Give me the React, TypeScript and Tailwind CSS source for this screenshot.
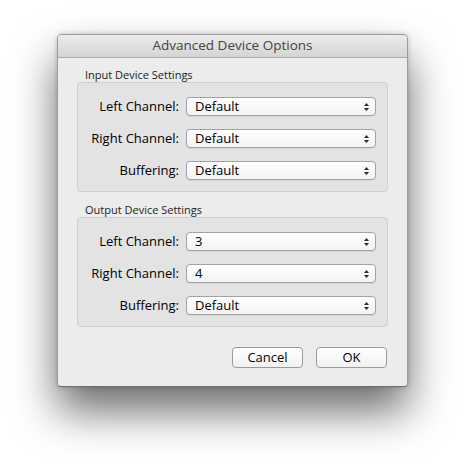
import React from "react";

const font = { fontFamily: '"Open Sans", "Liberation Sans", sans-serif' };

function Arrows() {
  return (
    <svg width="7" height="10" viewBox="0 0 7 10" className="shrink-0">
      <path d="M3.5 1 L6 4 L1 4 Z" fill="#2a2a2a" />
      <path d="M3.5 9 L6 6 L1 6 Z" fill="#2a2a2a" />
    </svg>
  );
}

function PopUp({ value }: { value: string }) {
  return (
    <div className="flex h-[19px] w-[190px] items-center justify-between rounded-[4px] border border-[#a3a3a3] bg-gradient-to-b from-white to-[#f3f3f3] pl-[8px] pr-[5px] shadow-[0_1px_0_rgba(0,0,0,0.06)]">
      <span className="text-[13px] leading-none text-black">{value}</span>
      <Arrows />
    </div>
  );
}

function Row({ label, value }: { label: string; value: string }) {
  return (
    <div className="flex items-center">
      <span className="w-[102px] pr-[1px] text-right text-[13px] leading-none text-black">
        {label}
      </span>
      <div className="ml-[6px]">
        <PopUp value={value} />
      </div>
    </div>
  );
}

function Group({
  title,
  rows,
}: {
  title: string;
  rows: { label: string; value: string }[];
}) {
  return (
    <div>
      <div className="pl-[8px] text-[11px] leading-[14px] text-[#222]">{title}</div>
      <div className="flex h-[110px] flex-col gap-[13px] rounded-[4px] border border-[#d0d0d0] bg-[#e3e3e3] pt-[14px]">
        {rows.map((r) => (
          <Row key={r.label} label={r.label} value={r.value} />
        ))}
      </div>
    </div>
  );
}

export default function App() {
  return (
    <div className="h-[466px] w-[465px] bg-white pl-[57px] pt-[34px]" style={font}>
      <div className="flex h-[353px] w-[351px] flex-col overflow-hidden rounded-t-[5px] rounded-b-[4px] border border-[#9c9c9c] border-b-[#6e6e6e] bg-[#ececec] shadow-[0_24px_44px_rgba(0,0,0,0.58),0_0_5px_rgba(0,0,0,0.2)]">
        <div className="flex h-[23px] shrink-0 items-center justify-center border-b border-[#acacac] bg-gradient-to-b from-[#ececec] to-[#d4d4d4]">
          <span className="text-[13.5px] leading-none text-[#444]">Advanced Device Options</span>
        </div>
        <div className="flex flex-col px-[19px] pt-[10px]">
          <Group
            title="Input Device Settings"
            rows={[
              { label: "Left Channel:", value: "Default" },
              { label: "Right Channel:", value: "Default" },
              { label: "Buffering:", value: "Default" },
            ]}
          />
          <div className="mt-[11px]">
            <Group
              title="Output Device Settings"
              rows={[
                { label: "Left Channel:", value: "3" },
                { label: "Right Channel:", value: "4" },
                { label: "Buffering:", value: "Default" },
              ]}
            />
          </div>
          <div className="mt-[20px] flex justify-end gap-[13px] pr-[1px]">
            <button className="h-[21px] w-[71px] rounded-[4px] border border-[#9a9a9a] bg-gradient-to-b from-white to-[#f1f1f1] text-[13px] leading-none text-black">
              Cancel
            </button>
            <button className="h-[21px] w-[71px] rounded-[4px] border border-[#9a9a9a] bg-gradient-to-b from-white to-[#f1f1f1] text-[13px] leading-none text-black">
              OK
            </button>
          </div>
        </div>
      </div>
    </div>
  );
}
